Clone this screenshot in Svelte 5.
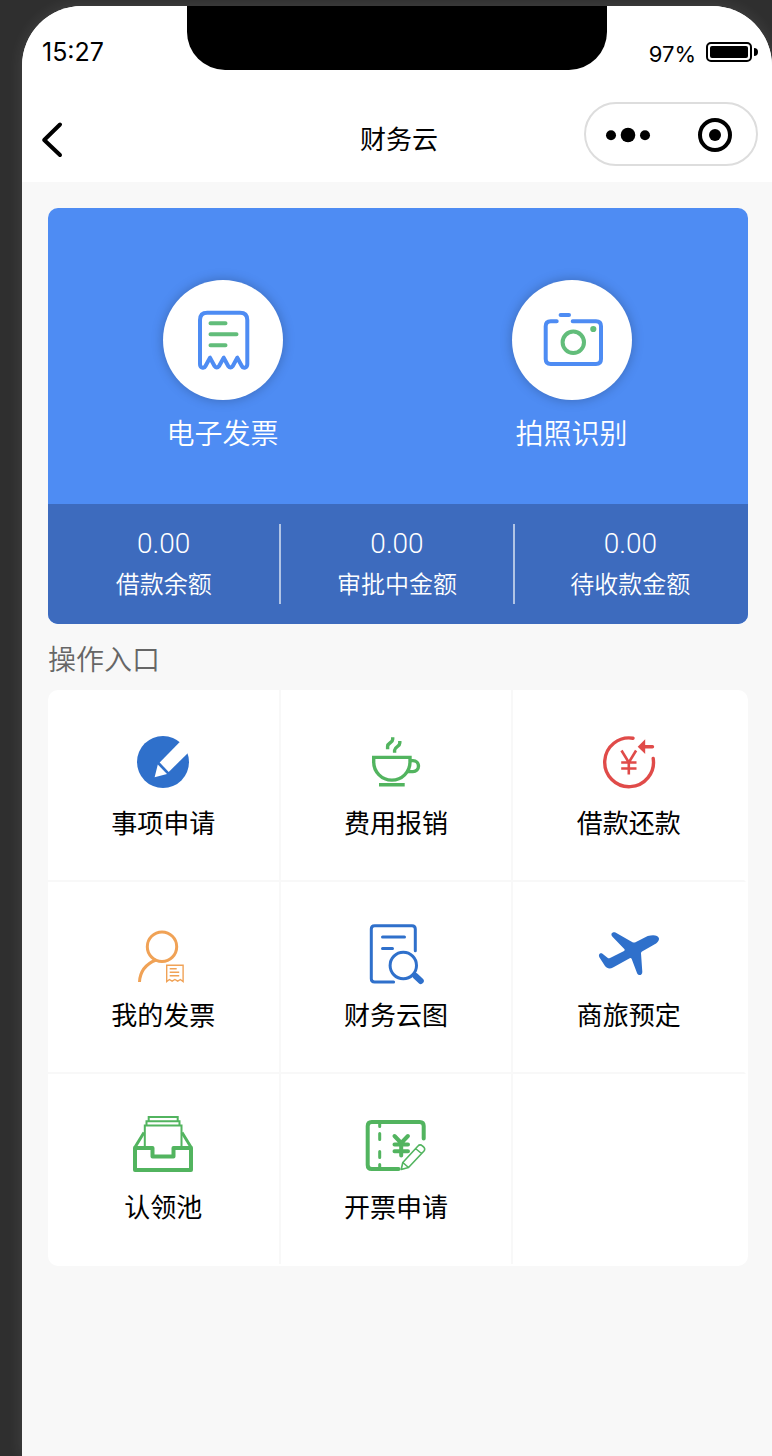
<script lang="ts">
    const time = "15:27";
    const battery = 97;

    const shortcuts = [
        { id: "invoice", label: "电子发票" },
        { id: "camera", label: "拍照识别" },
    ];

    const stats = [
        { label: "借款余额", value: 0 },
        { label: "审批中金额", value: 0 },
        { label: "待收款金额", value: 0 },
    ];

    const entries = [
        { id: "apply", label: "事项申请" },
        { id: "expense", label: "费用报销" },
        { id: "repay", label: "借款还款" },
        { id: "my-invoice", label: "我的发票" },
        { id: "chart", label: "财务云图" },
        { id: "travel", label: "商旅预定" },
        { id: "pool", label: "认领池" },
        { id: "billing", label: "开票申请" },
    ];
</script>

<div class="phone">
    <header class="header">
        <div class="status-bar">
            <span class="time">{time}</span>
            <div class="notch"></div>
            <div class="power">
                <span class="percent">{battery}%</span>
                <span class="battery"><span class="level"></span></span>
                <span class="battery-tip"></span>
            </div>
        </div>
        <nav class="nav-bar">
            <button class="back" aria-label="返回">
                <svg viewBox="0 0 24 40" width="24" height="40">
                    <path d="M20 6.500 4.200 22 20 37" />
                </svg>
            </button>
            <h1>财务云</h1>
            <div class="capsule">
                <button aria-label="更多">
                    <svg viewBox="0 0 48 36" width="48" height="36">
                        <circle cx="6" cy="19.300" r="5" />
                        <circle cx="23" cy="19" r="7.300" />
                        <circle cx="40" cy="19.300" r="5" />
                    </svg>
                </button>
                <button aria-label="关闭">
                    <svg viewBox="0 0 36 36" width="36" height="36">
                        <circle class="ring" cx="19" cy="19" r="15" />
                        <circle cx="19" cy="19" r="6" />
                    </svg>
                </button>
            </div>
        </nav>
    </header>

    <main>
        <section class="card">
            <div class="shortcuts">
                {#each shortcuts as item (item.id)}
                    <button class="shortcut">
                        <span class="disc">
                            <svg viewBox="0 0 120 120" width="120" height="120">
                                {#if item.id === "invoice"}
                                    <path
                                        d="M37 84V40q0-7.300 7.300-7.300H77q7.300 0 7.300 7.300v44c0 4-4 5-5.500 2l-4.500-8.300-4.500 8.300q-2.300 3-4.600 0l-4.500-8.300-4.600 8.300q-2.300 3-4.600 0L47 77.700 42.500 86c-1.500 3-5.500 2-5.500-2z"
                                    />
                                    <path class="accent" d="M47.500 43.300H62.500M47.500 54.300H73.500M47.500 65.300H62.500" />
                                {:else}
                                    <path d="M44.700 41.300H38.700q-5 0-5 5V79q0 5 5 5H84q5 0 5-5V46.300q0-5-5-5H60.700M48.600 35H57" />
                                    <circle class="accent" cx="61.300" cy="62.300" r="10.700" />
                                    <circle class="dot" cx="81.300" cy="49" r="3.100" />
                                {/if}
                            </svg>
                        </span>
                        <span>{item.label}</span>
                    </button>
                {/each}
            </div>
            <div class="stats">
                {#each stats as stat (stat.label)}
                    <div class="stat">
                        <span class="stat-value">{stat.value.toFixed(2)}</span>
                        <span class="stat-label">{stat.label}</span>
                    </div>
                {/each}
            </div>
        </section>

        <h2>操作入口</h2>

        <section class="grid">
            {#each entries as entry (entry.id)}
                <button class="entry {entry.id}">
                    <svg viewBox="0 0 60 60" width="60" height="60">
                        {#if entry.id === "apply"}
                            <circle class="solid" cx="30" cy="30" r="26" />
                            <path class="cut" d="M46.500 10.300 26.700 30.500l9 9.500L58 18l2-12z" />
                            <path class="cut" d="m24.800 32.500-3.200 12.700L34 42z" />
                        {:else if entry.id === "expense"}
                            <path d="M7.700 25.400H44V30a18.150 18.150 0 0 1-36.300 0zM44 28.600h3a5.500 5.500 0 0 1 0 11h-5M13 52.700h25.700" />
                            <path d="M26.700 5.200v2q0 2-2.500 3.600t-2.600 3.600v2.800M33.800 9v2q0 2-2.500 3.600t-2.700 3.600v2.600" />
                        {:else if entry.id === "repay"}
                            <path class="round" d="M34 6.200A24.400 24.400 0 1 0 54.200 26.500" />
                            <path class="rmb" d="m22.500 18.500 7.300 12 7.300-12M29.800 30v12.500M22.200 30.500h15.300M22.200 36.500h15.300" />
                            <path class="round" d="M45 14.700h8.500" />
                            <path class="solid" d="M38.700 14.700 46.200 7.300V22z" />
                        {:else if entry.id === "my-invoice"}
                            <circle cx="29" cy="22.700" r="14.700" />
                            <path d="M23 36C13 40 7 48 6.500 58" />
                            <path
                                class="thin"
                                d="M33.700 57.500V41.200h16.400v16.300l-2.700-2-2.700 1.700-2.800-1.700-2.800 1.700-2.700-1.700zM36.700 44.700h7M36.700 48.300h9.500M36.700 51.700h9.500"
                            />
                        {:else if entry.id === "chart"}
                            <path class="round" d="M49.300 26.700V5q0-3.300-3.300-3.300H8.600Q5.300 1.700 5.300 5v49.700q0 3.300 3.300 3.300h19M16.500 13H38.500M16.500 24.500H26.500" />
                            <circle cx="37.300" cy="41.500" r="13.200" />
                            <path class="handle" d="m49.500 52 5.300 5" />
                        {:else if entry.id === "travel"}
                            <path
                                class="solid"
                                d="M48.700 12c4-.8 7-.9 9.300 0 2.500 1.300 2.500 3.500 1 5.500-1 1.500-2.500 2.500-5 3.700L43 27.500q-1 .6-1 1.800l1.300 18.400c.2 3.700-4 4.800-5.300 1.300L32.700 35q-.6-1.500-2-.8L14 43.500c-3 1.600-6 1.300-8-1.500L.5 33.500C-1 30.500 1 28.500 3.500 29.700l5 4q1.200.9 2.500.2l14-7q1.500-.9.300-2L13.700 13C11 10.200 13 7.700 16.500 8.500l17 9.700q1.500.8 3 0z"
                            />
                        {:else if entry.id === "pool"}
                            <path class="sheet" d="M15.700 5V1h29v4M13.500 9V5.300h33V9M11.800 32V9.500h36.700V32" />
                            <path class="side" d="M1.500 32 11 16.500M58.500 32 49 16.500" />
                            <path class="tray" d="M2 32h17.500v8.500h21V32H58v22H2z" />
                        {:else}
                            <path class="frame" d="M57.700 22.500V10q0-4-4-4h-48q-4 0-4 4v39q0 4 4 4h26.800" />
                            <path class="dash" d="M13.700 8v2.500M13.700 17.500v6M13.700 35.500v6M13.700 48.500V52" />
                            <path class="yen" d="m28.500 20 6.700 7 6.700-7M35.200 27v12.500M28.500 28.500h13.500M28.500 35.200h13.500" />
                            <path class="pencil" d="M35.200 53.500 36.800 46.500 52 30q2-2.300 4.500 0 3.500 2.500 1.500 5L42.500 51.500zM36.800 46.500l5.700 5M49.500 32.500l6 5" />
                        {/if}
                    </svg>
                    <span>{entry.label}</span>
                </button>
            {/each}
        </section>
    </main>
</div>

<style>
    :global(body) {
        background: #2f2f2f;
    }

    .phone {
        display: flex;
        flex-direction: column;
        box-sizing: border-box;
        min-height: calc(100vh - 6px);
        margin: 6px 0 0 22px;
        overflow: hidden;
        border-radius: 60px 60px 0 0;
        background: #f8f8f8;
        box-shadow: 0 0 16px rgba(255, 255, 255, 0.1);
        color: #000;
        font-family: "Noto Sans CJK SC", sans-serif;
    }

    button {
        padding: 0;
        border: 0;
        background: none;
        color: inherit;
        font: inherit;
        cursor: pointer;
    }

    svg {
        display: block;
    }

    .header {
        background: #fff;
    }

    .status-bar {
        display: grid;
        grid-template-columns: 1fr 420px 1fr;
        height: 88px;
        font-family: Inter, sans-serif;
    }

    .time {
        padding: 30px 0 0 20px;
        font-size: 25px;
        line-height: 32px;
    }

    .notch {
        height: 64px;
        border-radius: 0 0 38px 38px;
        background: #000;
    }

    .power {
        display: flex;
        align-items: center;
        justify-content: flex-end;
        height: 32px;
        padding: 30px 14px 0 0;
    }

    .percent {
        margin-right: 10px;
        font-size: 22px;
        line-height: 32px;
        padding-top: 4px;
    }

    .battery {
        box-sizing: border-box;
        width: 46px;
        height: 20px;
        padding: 2px;
        border: 2px solid #000;
        border-radius: 5px;
    }

    .level {
        display: block;
        height: 12px;
        border-radius: 2px;
        background: #000;
    }

    .battery-tip {
        width: 4px;
        height: 8px;
        margin-left: 2px;
        border-radius: 0 4px 4px 0;
        background: #000;
    }

    .nav-bar {
        display: grid;
        grid-template-columns: 1fr auto 1fr;
        align-items: center;
        height: 88px;
        padding: 0 14px 0 18px;
    }

    .back {
        justify-self: start;
    }

    .back path {
        fill: none;
        stroke: #000;
        stroke-width: 4;
        stroke-linecap: round;
        stroke-linejoin: round;
    }

    h1 {
        margin: 0;
        font-size: 26px;
        font-weight: 400;
        line-height: 36px;
    }

    .capsule {
        display: flex;
        justify-self: end;
        box-sizing: border-box;
        width: 174px;
        height: 64px;
        margin-bottom: 8px;
        border: 2px solid #ddd;
        border-radius: 32px;
    }

    .capsule button {
        display: flex;
        flex: 1;
        align-items: center;
        justify-content: center;
    }

    .ring {
        fill: none;
        stroke: #000;
        stroke-width: 4;
    }

    main {
        padding: 26px 24px 26px 26px;
    }

    .card {
        overflow: hidden;
        border-radius: 10px;
        background: #4e8cf3;
        color: #fff;
        font-weight: 350;
    }

    .shortcuts {
        display: flex;
        padding: 72px 2px 52px 0;
    }

    .shortcut {
        display: flex;
        flex: 1;
        flex-direction: column;
        align-items: center;
        gap: 12px;
        font-size: 28px;
        line-height: 40px;
    }

    .disc {
        border-radius: 50%;
        background: #fff;
        box-shadow: 0 0 12px rgba(0, 0, 0, 0.25);
    }

    .disc svg {
        fill: none;
        stroke: #4e8cf3;
        stroke-width: 4;
        stroke-linecap: round;
        stroke-linejoin: round;
    }

    .disc .accent {
        stroke: #62bd7a;
    }

    .disc .dot {
        fill: #62bd7a;
        stroke: none;
    }

    .stats {
        display: flex;
        padding: 20px 0;
        background: #3d6bbe;
    }

    .stat {
        display: flex;
        flex: 1;
        flex-direction: column;
        align-items: center;
        height: 80px;
        border-right: 2px solid #b1c4e5;
    }

    .stat:last-child {
        border-right-color: transparent;
    }

    .stat-value {
        font-family: Roboto, sans-serif;
        font-size: 28px;
        font-weight: 300;
        line-height: 40px;
    }

    .stat-label {
        font-size: 24px;
        line-height: 38px;
    }

    h2 {
        margin: 14px 0 12px;
        color: #666;
        font-size: 28px;
        font-weight: 350;
        line-height: 40px;
    }

    .grid {
        display: grid;
        grid-template-columns: repeat(3, 1fr);
        padding: 0 2px 2px 0;
        border-radius: 10px;
        background: #fff;
    }

    .entry {
        display: flex;
        flex-direction: column;
        align-items: center;
        gap: 12px;
        box-sizing: border-box;
        padding: 42px 0 40px;
        border-right: 2px solid #f8f8f8;
        border-bottom: 2px solid #f8f8f8;
        font-size: 26px;
        line-height: 36px;
    }

    .entry:nth-child(3n) {
        border-right-color: transparent;
    }

    .entry:nth-child(n + 7) {
        border-bottom: 0;
    }

    .entry svg {
        overflow: visible;
        fill: none;
        stroke: currentColor;
        stroke-width: 3;
    }

    .apply svg,
    .chart svg,
    .travel svg {
        color: #2f70cb;
    }

    .expense svg,
    .pool svg,
    .billing svg {
        color: #52b45f;
    }

    .repay svg {
        color: #e04b49;
    }

    .my-invoice svg {
        color: #f0a256;
    }

    .expense svg,
    .repay svg {
        stroke-width: 3.4;
    }

    .entry .solid {
        fill: currentColor;
        stroke: none;
    }

    .entry .cut {
        fill: #fff;
        stroke: none;
    }

    .round {
        stroke-linecap: round;
    }

    .rmb {
        stroke-width: 2.6;
    }

    .thin {
        stroke-width: 1.4;
    }

    .handle {
        stroke-width: 6;
        stroke-linecap: round;
    }

    .sheet {
        stroke-width: 2;
    }

    .tray,
    .frame,
    .yen {
        stroke-width: 4;
        stroke-linejoin: round;
    }

    .frame,
    .dash,
    .yen {
        stroke-linecap: round;
    }

    .entry .pencil {
        fill: #fff;
        stroke-width: 1.6;
        stroke-linejoin: round;
    }
</style>
